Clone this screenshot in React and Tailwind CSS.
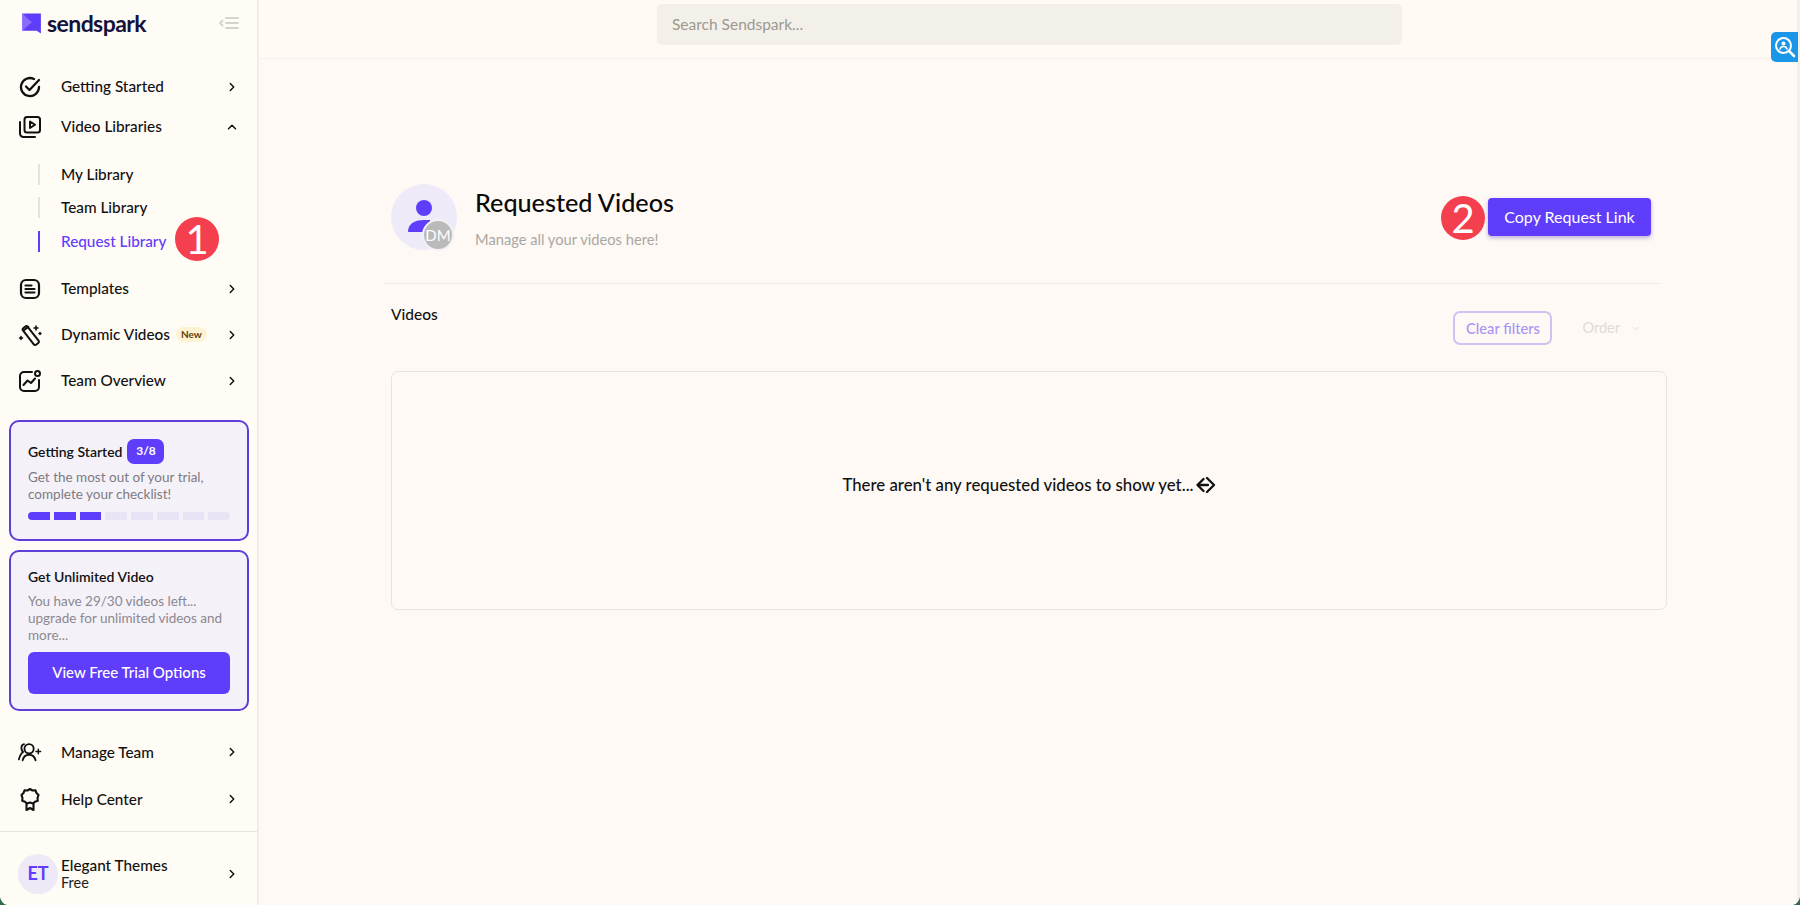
import { ChevronRight, ChevronUp, ChevronDown } from "lucide-react";

const font = "font-['Lato','Liberation_Sans',sans-serif]";

const CheckIcon = () => (
  <svg width="22" height="22" viewBox="0 0 22 22" fill="none" stroke="#111" strokeWidth="2.300" strokeLinecap="round" strokeLinejoin="round">
    <path d="M20 11a9 9 0 1 1-5-8" />
    <path d="M7 10.500l3.500 3.500L20 4" />
  </svg>
);

const VideoIcon = () => (
  <svg width="24" height="24" viewBox="0 0 24 24" fill="none" stroke="#111" strokeWidth="2" strokeLinecap="round" strokeLinejoin="round">
    <rect x="6.500" y="2" width="15.500" height="15.500" rx="2.500" />
    <path d="M2 7v11.500A3.500 3.500 0 0 0 5.500 22H17" />
    <path d="M12 6.500v6.500l5-3.250z" />
  </svg>
);

const TemplateIcon = () => (
  <svg width="22" height="22" viewBox="0 0 22 22" fill="none" stroke="#111" strokeWidth="2.200" strokeLinecap="round">
    <rect x="2" y="2" width="18" height="18" rx="5" />
    <path d="M6.500 7.500h6M6.500 11h9M6.500 14.500h9" />
  </svg>
);

const WandIcon = () => (
  <svg width="24" height="24" viewBox="0 0 24 24" fill="none" stroke="#111" strokeWidth="2" strokeLinecap="round" strokeLinejoin="round">
    <rect x="-3" y="-8.500" width="6" height="21" rx="2" transform="translate(11.500 11) rotate(-38)" />
    <path d="M5.500 7.500l4.800-3.600" />
    <path d="M18 3v4M16 5h4M22 9.500v2M21 10.500h2M3 13.500v3M1.500 15h3" strokeWidth="1.600" />
  </svg>
);

const OverviewIcon = () => (
  <svg width="24" height="24" viewBox="0 0 24 24" fill="none" stroke="#111" strokeWidth="2" strokeLinecap="round" strokeLinejoin="round">
    <path d="M14 3H6a4 4 0 0 0-4 4v11a4 4 0 0 0 4 4h11a4 4 0 0 0 4-4v-7" />
    <circle cx="19.500" cy="4.500" r="2.500" />
    <path d="M5.500 16l4-4.500 3.500 2.500 4-4.500" />
  </svg>
);

const TeamIcon = () => (
  <svg width="26" height="22" viewBox="0 0 26 22" fill="none" stroke="#111" strokeWidth="2" strokeLinecap="round" strokeLinejoin="round">
    <circle cx="12" cy="7.500" r="5" />
    <path d="M5 20c1-4 3.500-6 7-6s6 2 7 6" />
    <path d="M6.500 2.500C3.500 3 2.500 8 5.500 11 3 12.500 2 15 1 19" />
    <path d="M22 8v5M19.500 10.500h5" strokeWidth="1.600" />
  </svg>
);

const RosetteIcon = () => (
  <svg width="22" height="24" viewBox="0 0 22 24" fill="none" stroke="#111" strokeWidth="2.100" strokeLinecap="round" strokeLinejoin="round">
    <path d="M11 2l2.500 1.500 3-.2 1 2.800 2 2-1 2.900.3 2.800-2.800 1-2 1.700L11 15.500 8 16.500l-2-1.700-2.800-1 .3-2.800-1-2.900 2-2 1-2.800 3 .2z" />
    <path d="M7.500 16.500V23l3.500-2 3.500 2v-6.500" />
  </svg>
);

const Logo = () => (
  <svg width="20" height="22" viewBox="0 0 19 21">
    <path d="M0 1.500L18 1.500V20.500L14 18H0L7.500 9.500Z" fill="#5f3dfb" />
    <path d="M0 1.500L9.500 9.800 0 18Z" fill="#8a6dfc" />
  </svg>
);

const CollapseIcon = () => (
  <svg width="20" height="14" viewBox="0 0 20 14" fill="none" stroke="#d6d3cd" strokeWidth="1.800" strokeLinecap="round" strokeLinejoin="round">
    <path d="M7 2h12M7 7h12M7 12h12" />
    <path d="M3.500 4.500L1 7l2.500 2.500" />
  </svg>
);

const NavRow = ({ icon, label, badge, open, className = "" }) => (
  <div className={`flex items-center pl-[18px] pr-[18px] h-[28px] ${className}`}>
    <div className="w-[24px] h-[24px] flex items-center justify-center shrink-0">{icon}</div>
    <span className="ml-[19px] text-[15.300px] font-medium text-[#111]">{label}</span>
    {badge && (
      <span className="ml-[6px] px-[5px] py-px rounded-full bg-[#fdf3d3] text-[10px] font-bold text-[#5a4310] leading-[13px]">New</span>
    )}
    <span className="ml-auto text-[#111]">
      {open ? <ChevronUp size={14} strokeWidth={2.500} /> : <ChevronRight size={14} strokeWidth={2.500} />}
    </span>
  </div>
);

const SubRow = ({ label, active }) => (
  <div className="flex items-center h-[21px] pl-[38px]">
    <span className={`w-[2px] h-[21px] ${active ? "bg-[#5f3dfb]" : "bg-[#e6e3dd]"}`} />
    <span className={`ml-[21px] text-[15.300px] font-medium ${active ? "text-[#5f3dfb]" : "text-[#111]"}`}>{label}</span>
  </div>
);

const Marker = ({ n, className }) => (
  <div className={`absolute w-[44px] h-[44px] rounded-full bg-[#f43f4e] text-white flex items-center justify-center text-[40px] leading-none ${className}`}>
    {n}
  </div>
);

const Sidebar = () => (
  <aside className="relative w-[259px] shrink-0 h-full border-r-2 border-[#f0ede8] flex flex-col">
    <div className="flex items-center pl-[22px] pr-[18px] h-[47px] mb-[1px]">
      <Logo />
      <span className="ml-[5px] text-[23px] font-bold text-[#14123a] tracking-tight">sendspark</span>
      <span className="ml-auto"><CollapseIcon /></span>
    </div>
    <div className="mt-[25px] flex flex-col">
      <NavRow icon={<CheckIcon />} label="Getting Started" />
      <NavRow className="mt-[12px]" icon={<VideoIcon />} label="Video Libraries" open />
      <div className="mt-[23px] flex flex-col gap-[12.500px]">
        <SubRow label="My Library" />
        <SubRow label="Team Library" />
        <SubRow label="Request Library" active />
      </div>
      <NavRow className="mt-[23px]" icon={<TemplateIcon />} label="Templates" />
      <NavRow className="mt-[18px]" icon={<WandIcon />} label="Dynamic Videos" badge />
      <NavRow className="mt-[18px]" icon={<OverviewIcon />} label="Team Overview" />
    </div>
    <div className="mt-[25px] ml-[9px] mr-[8px] h-[121px] rounded-[10px] border-2 border-[#5f3dd8] bg-[#f5f1f8] px-[17px] pt-[17px]">
      <div className="flex items-center">
        <span className="text-[14px] font-semibold text-[#111]">Getting Started</span>
        <span className="ml-[5px] w-[37px] h-[25px] rounded-[7px] bg-[#5f3dfb] text-white text-[12px] font-bold flex items-center justify-center">3/8</span>
      </div>
      <p className="mt-[5px] text-[13.500px] leading-[17px] text-[#7d7a82]">Get the most out of your trial, complete your checklist!</p>
      <div className="mt-[9px] flex gap-[4px]">
        {[0, 1, 2, 3, 4, 5, 6, 7].map((i) => (
          <span
            key={i}
            className={`h-[8px] flex-1 ${i < 3 ? "bg-[#5f3dfb]" : "bg-[#e8e4f5]"} ${i === 0 ? "rounded-l-full" : ""} ${i === 7 ? "rounded-r-full" : ""}`}
          />
        ))}
      </div>
    </div>
    <div className="mt-[9px] ml-[9px] mr-[8px] h-[162px] rounded-[10px] border-2 border-[#5f3dd8] bg-[#f5f1f8] px-[17px] pt-[14px]">
      <div className="text-[14px] font-semibold text-[#111]">Get Unlimited Video</div>
      <p className="mt-[6px] text-[13.500px] leading-[17px] text-[#8b8890]">You have 29/30 videos left... upgrade for unlimited videos and more...</p>
      <div className="mt-[8px] h-[42px] rounded-[6px] bg-[#5f3dfb] text-white text-[15px] font-medium flex items-center justify-center">View Free Trial Options</div>
    </div>
    <NavRow className="mt-[27px]" icon={<TeamIcon />} label="Manage Team" />
    <NavRow className="mt-[19px]" icon={<RosetteIcon />} label="Help Center" />
    <div className="mt-[18px] border-t border-[#e6e3dd] flex items-center pl-[18px] pr-[18px] pt-[10px] h-[74px]">
      <div className="w-[40px] h-[40px] rounded-full bg-[#ede9f6] flex items-center justify-center text-[#5f3dfb] text-[18px] font-bold">ET</div>
      <div className="ml-[3px] flex flex-col leading-[17px]">
        <span className="text-[15.300px] font-medium text-[#111]">Elegant Themes</span>
        <span className="text-[14.500px] text-[#222]">Free</span>
      </div>
      <ChevronRight className="ml-auto" size={14} strokeWidth={2.500} color="#111" />
    </div>
    <Marker n="1" className="left-[175px] top-[217px]" />
  </aside>
);

const Main = () => (
  <main className="flex-1 min-w-0 h-full flex flex-col">
    <div className="h-[59px] shrink-0 border-b border-[#f5f1ea] flex justify-center bg-[#fffbf4]">
      <div className="mt-[4px] w-[745px] h-[41px] rounded-[5px] bg-[#f3f0e9] flex items-center pl-[15px] text-[15.500px] text-[#9c9890]">
        Search Sendspark...
      </div>
    </div>
    <div className="flex-1 pl-[124px] pr-[133px] bg-[#fef9f5]">
      <div className="relative pl-[8px] pr-[8px] pt-[125px] pb-[33px] border-b border-[#eeebe6] mr-[7px] flex items-center">
        <div className="relative w-[66px] h-[66px] rounded-full bg-[#eeeaf7] shrink-0 flex items-center justify-center">
          <svg width="34" height="34" viewBox="0 0 34 34" className="mb-[2px]">
            <circle cx="17" cy="9" r="8" fill="#5f3dfb" />
            <path d="M1 33c0-8 6-12 16-12h6v12z" fill="#5f3dfb" />
          </svg>
          <div className="absolute left-[31px] top-[35px] w-[32px] h-[32px] rounded-full bg-[#bbbabb] border-2 border-[#f4f1f6] flex items-center justify-center text-white text-[15px]">DM</div>
        </div>
        <div className="ml-[18px] flex flex-col">
          <span className="text-[25.200px] leading-[32px] font-medium text-[#0a0a0a]">Requested Videos</span>
          <span className="mt-[11px] text-[14.700px] leading-[20px] text-[#aaa7a3]">Manage all your videos here!</span>
        </div>
        <div className="relative ml-auto mr-[1px] w-[163px] h-[38px] rounded-[4px] bg-[#5f3dfb] shadow-[0_2px_4px_rgba(60,40,160,0.35)] text-white text-[16px] flex items-center justify-center">
          Copy Request Link
          <Marker n="2" className="-left-[47px] -top-[2px]" />
        </div>
      </div>
      <div className="pl-[8px] pt-[20px] flex justify-between items-start">
        <span className="text-[15.500px] font-medium leading-[20px] text-[#111]">Videos</span>
        <div className="flex items-center mt-[7px]">
          <span className="w-[99px] h-[34px] rounded-[7px] border-2 border-[#cdc3f3] text-[#a993f5] text-[14.700px] font-medium flex items-center justify-center">Clear filters</span>
          <span className="ml-[30px] text-[14.500px] text-[#dedbd7]">Order</span>
          <ChevronDown className="ml-[10px] mr-[26px]" size={11} color="#dedbd7" />
        </div>
      </div>
      <div className="ml-[8px] mt-[26px] h-[239px] rounded-[7px] border border-[#e7e3de] flex items-center justify-center pb-[11px] text-[16.800px] font-medium text-[#111]">
        There aren't any requested videos to show yet...
        <svg className="ml-[2px]" width="20" height="18" viewBox="0 0 20 18" fill="none" stroke="#111" strokeWidth="2.300" strokeLinecap="round" strokeLinejoin="round">
          <path d="M7.500 3L1.500 9l6 6M11 2l7 7-7 7" />
          <path d="M2 9h10" />
        </svg>
      </div>
    </div>
  </main>
);

export default function App() {
  return (
    <div className={`relative w-full h-[905px] overflow-hidden flex bg-[#fffbf5] ${font}`}>
      <Sidebar />
      <Main />
      <div className="absolute right-0 top-0 w-[3px] h-full bg-[#f3f0ea]" />
      <div className="absolute right-[2px] top-[32px] w-[27px] h-[30px] rounded-l-[5px] bg-[#1c96e8] flex items-center justify-center">
        <svg width="24" height="24" viewBox="0 0 24 24" fill="none" stroke="white" strokeWidth="2" strokeLinecap="round">
          <circle cx="10.500" cy="10.500" r="7.500" />
          <path d="M16 16l5 5" strokeWidth="2.500" />
          <circle cx="10.500" cy="8.500" r="2" fill="white" stroke="none" />
          <path d="M7 14c.5-2 2-2.500 3.500-2.500S13.500 12 14 14" strokeWidth="1.500" />
        </svg>
      </div>
      <svg className="absolute left-0 bottom-0" width="7" height="8" viewBox="0 0 7 8">
        <path d="M0 0C1 4 3 7 7 8H0Z" fill="#2f6b45" />
      </svg>
      <svg className="absolute right-0 bottom-0" width="7" height="8" viewBox="0 0 7 8">
        <path d="M7 0C6 4 4 7 0 8H7Z" fill="#2f6b45" />
      </svg>
    </div>
  );
}
